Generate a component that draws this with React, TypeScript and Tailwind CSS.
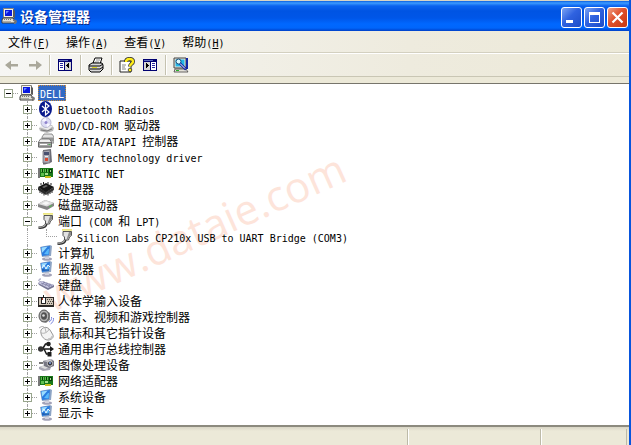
import { Fragment, useState } from "react";
import type { ReactNode } from "react";

const CJK = "font-['Noto_Sans_CJK_SC',sans-serif]";

function Svg({ children, crisp = false }: { children: ReactNode; crisp?: boolean }) {
  return (
    <svg
      viewBox="0 0 16 16"
      className="h-4 w-4 shrink-0"
      aria-hidden="true"
      shapeRendering={crisp ? "crispEdges" : "auto"}
    >
      {children}
    </svg>
  );
}

function ComputerIcon() {
  return (
    <Svg>
      <path d="M2.500 .5h10v9h-10z" fill="#f4f2e8" stroke="#88867c" />
      <path d="M12 1l2 2v7l-2-1z" fill="#5a5a5a" />
      <path d="M4 2h7v6H4z" fill="#0a18e0" />
      <path d="M5 3h3L5 6z" fill="#6a8cff" />
      <path d="M2 10h10l2 3v2H1v-3z" fill="#e4e2d8" stroke="#3c3c3c" />
      <path d="M3 11.5h7M2.500 13.500h7" stroke="#777" strokeDasharray="1 1" />
      <path d="M12 12.500c4-1 4 2.500 1 3" fill="none" stroke="#777" strokeWidth="1.500" />
    </Svg>
  );
}

function BluetoothIcon() {
  return (
    <Svg>
      <ellipse cx="7.500" cy="8" rx="6.500" ry="8" fill="#08188c" />
      <path d="M4 5l7 6-3.500 3V2L11 5l-7 6" fill="none" stroke="#fff" strokeWidth="1.200" />
    </Svg>
  );
}

function DiscIcon() {
  return (
    <Svg>
      <path d="M1 11l4-2 9-1 2 3-1 3-6 2-7-2z" fill="#b9b9b9" />
      <path d="M1 10l5-2 9 1-5 4z" fill="#ececec" />
      <path d="M3 13l6 1 5-2" stroke="#777" fill="none" />
      <circle cx="8" cy="5.500" r="5" fill="#dcdcf4" stroke="#a9a9c4" strokeWidth=".8" />
      <path d="M8 5.500L4 3.500A5 5 0 0 1 8 1zM8 5.500l4 2A5 5 0 0 1 9 10z" fill="#f8f6ff" />
      <circle cx="8" cy="5.500" r="1.500" fill="#8f83cd" />
    </Svg>
  );
}

function IdeIcon() {
  return (
    <Svg>
      <path d="M4 4l2-3h8l2 3v6H4z" fill="#e2e2e2" stroke="#777" strokeWidth=".8" />
      <path d="M4 4.500h12v4H4z" fill="#959595" />
      <path d="M0.500 9l2-3h9l2 3v5h-13z" fill="#efefef" stroke="#666" strokeWidth=".8" />
      <path d="M.5 9.500h13v4.500H.5z" fill="#a4a4a4" stroke="#555" strokeWidth=".7" />
      <path d="M2 11.500h7" stroke="#fff" />
      <path d="M10.500 11h2v1h-2z" fill="#4caf50" />
    </Svg>
  );
}

function MemoryIcon() {
  return (
    <Svg>
      <path d="M5 1l8-1 1 13-7 2.500H5z" fill="#707078" />
      <path d="M5 2l7-1v13H5z" fill="#a8a8b4" stroke="#66666e" strokeWidth=".7" />
      <path d="M6 3h5v3H6z" fill="#485070" />
      <path d="M7 7h3v1H7z" fill="#eee" />
      <path d="M7 9h3v3H7z" fill="#d84830" />
    </Svg>
  );
}

function CardIcon() {
  return (
    <Svg crisp>
      <path d="M0 3h2v10H0z" fill="#777" />
      <path d="M2 3h13v9H2z" fill="#187818" />
      <path d="M3 4h3v3H3zM7 4h3v3H7zM3 8h3v3H3z" fill="#5fc050" />
      <path d="M4 4h1v3H4zM8 4h1v3H8zM11 4h3v4h-3z" fill="#073c0a" />
      <path d="M12 5h1v2h-1zM7 8h3v2H7z" fill="#a4df8c" />
      <path d="M7 11h6v2H7z" fill="#c8c020" />
    </Svg>
  );
}

function ChipIcon() {
  return (
    <Svg>
      <path d="M0 6l8-4 8 4-8 6z" fill="#161616" />
      <path d="M0 6v3l8 5V11z" fill="#303030" />
      <path d="M16 6v3l-8 5V11z" fill="#454545" />
      <path d="M2 8v4M4 9v4M6 10.500v4M10 10.500v4M12 9v4M14 8v4" stroke="#222" />
      <path d="M3 4V2M5.500 3V1M10 3V1M13 4V2" stroke="#222" />
      <path d="M4 6l4-2 2 1-4 2z" fill="#666" />
    </Svg>
  );
}

function DiskIcon() {
  return (
    <Svg>
      <path d="M0 7l7-4 9 3v3l-7 4-9-3z" fill="#858585" />
      <path d="M0 7l7-4 9 3-7 3.500z" fill="#dedede" />
      <path d="M4 6.500l4-2 4 1.500-4 2z" fill="#f8f8f8" />
      <path d="M11 10l3-1.500" stroke="#4fc04f" />
    </Svg>
  );
}

function PortIcon() {
  return (
    <Svg>
      <path d="M.5 14.500c5 .5 7.500-.5 8-4.500" fill="none" stroke="#333" strokeWidth="2.600" />
      <path d="M.5 14c5 .5 7-.5 7.500-4" fill="none" stroke="#b8b8b8" strokeWidth="1.100" />
      <path d="M6 2.500h8.500v4l-2 1.500-1 3h-4V8L6 6.500z" fill="#e2e2e2" stroke="#444" strokeWidth=".9" />
      <path d="M12 3h2v3l-2 2-1 2.500h-1.500z" fill="#8c8c8c" />
      <path d="M5.500 .5h9" stroke="#d8cc00" strokeDasharray="1 1" />
      <path d="M5 1.500h10" stroke="#f2ee9c" />
    </Svg>
  );
}

function MonitorIcon({ wave = false }: { wave?: boolean }) {
  return (
    <Svg>
      <ellipse cx="9" cy="14" rx="5" ry="1.800" fill="#a3a3b8" />
      <path d="M7 11h4v3H7z" fill="#d0d0dc" />
      <path d="M2 2l10-2 2 1-1 10-9 1z" fill="#8da4c4" />
      <path d="M3 2l9-1-1 9-7 1z" fill="#2a7ce0" />
      <path d="M3.500 2.500l6-.8-5.300 6z" fill="#9adcff" />
      <path d="M6 9l4-5 1 0-.5 5.500z" fill="#58b8fa" />
      {wave && <path d="M4 7l2-3 2 4 2-4 2 2" fill="none" stroke="#e8f8ff" />}
      {wave && <path d="M4 9h7" stroke="#164690" />}
    </Svg>
  );
}

function KeyboardIcon() {
  return (
    <Svg>
      <path d="M3 5C0 4 0 2 3 2" fill="none" stroke="#9090b0" />
      <path d="M0 6l4-2 12 4v2l-6 3L1 8z" fill="#777794" />
      <path d="M0 6l4-2 12 4-6 3z" fill="#c8c8e2" />
      <path d="M3 6l9 3.500M5 5l9 3.500M4 7.500l3-2.500M7 8.500l3-2M10 9.500l3-2" stroke="#77779c" strokeWidth=".7" />
    </Svg>
  );
}

function HidIcon() {
  return (
    <Svg crisp>
      <path d="M0 4h16v10H0z" fill="#2c2826" />
      <path d="M1 5h14v7H1z" fill="#cfc6b8" />
      <path d="M9 6h1v1H9zM11 6h1v1h-1zM13 6h1v1h-1zM10 8h1v1h-1zM12 8h1v1h-1zM14 8h1v1h-1zM9 10h1v1H9zM11 10h1v1h-1zM13 10h1v1h-1z" fill="#4a4440" />
      <path d="M5 2h1v2H5zM3 4h5v7H3z" fill="#222" />
      <path d="M4 5h3v5H4z" fill="#fff" />
      <path d="M4 5h1v2H4z" fill="#a83828" />
    </Svg>
  );
}

function SoundIcon() {
  return (
    <Svg>
      <path d="M2 3l5-2 5 3v7l-4 3-5-2z" fill="#8a8a8a" />
      <ellipse cx="6" cy="7" rx="5" ry="6" fill="#b4b4b4" stroke="#555" />
      <ellipse cx="6" cy="7" rx="3" ry="3.800" fill="#525252" />
      <circle cx="5.500" cy="6.500" r="1.300" fill="#ddd" />
      <path d="M11 13c2-1 3-3 2.500-5M12.500 15c2-1 3.500-4 3-6" fill="none" stroke="#7c88e0" />
    </Svg>
  );
}

function MouseIcon() {
  return (
    <Svg>
      <path d="M1 3c3-2 4-2 6 0" fill="none" stroke="#aaa" />
      <path d="M3 5c3-4 7-3 9 0l3 5c1 3-2 5-5 5-5 0-8-6-7-10z" fill="#f4f4f4" stroke="#989898" />
      <path d="M3 8c4 1 7-1 8-4M7 3l1 4" fill="none" stroke="#a4a4a4" strokeWidth=".8" />
      <path d="M10 14c2 0 4-1 4-3" fill="none" stroke="#c4c4c4" strokeWidth="1.500" />
    </Svg>
  );
}

function UsbIcon() {
  return (
    <Svg>
      <path d="M2 8h12M4.500 8l3-5H10M6 8l2.500 5H12" fill="none" stroke="#1c1c1c" strokeWidth="1.500" />
      <circle cx="2.800" cy="8" r="2.800" fill="#333" />
      <circle cx="10.500" cy="3" r="2.300" fill="#222" />
      <path d="M9.500 11h4v4.500h-4zM12 5l4 3-4 3z" fill="#1c1c1c" />
    </Svg>
  );
}

function CameraIcon() {
  return (
    <Svg>
      <path d="M1 10l6-2 6 2-1 3-7 1-4-2z" fill="#a6a6b2" />
      <path d="M2 10l5-2 5 2-5 2z" fill="#ddd" />
      <path d="M5 4l8-2 3 2v5l-5 2-5-2z" fill="#777782" />
      <path d="M5 4l8-2 2 1-6 2z" fill="#c4c4cc" />
      <circle cx="12" cy="6.500" r="2.600" fill="#34343c" stroke="#e4e4e4" strokeWidth=".8" />
      <circle cx="12" cy="6" r="1" fill="#86a4e0" />
      <path d="M1 5h4v2H1z" fill="#777" />
    </Svg>
  );
}

/* Latin letters take half the width of a Chinese character. */
function Label({ text }: { text: string }) {
  const runs = text.match(/[\x20-\x7e]+|[^\x20-\x7e]+/g) ?? [];
  return (
    <span className="block whitespace-pre text-xs leading-4">
      {runs.map((run, i) =>
        run.charCodeAt(0) < 127 ? (
          <span key={i} className="font-['DejaVu_Sans_Mono',monospace] text-[10px] leading-none">
            {run}
          </span>
        ) : (
          <Fragment key={i}>{run}</Fragment>
        ),
      )}
    </span>
  );
}

function Expander({ open, name, onClick }: { open: boolean; name: string; onClick: () => void }) {
  return (
    <button
      type="button"
      aria-expanded={open}
      aria-label={name}
      onClick={onClick}
      className="flex h-[9px] w-[9px] shrink-0 items-center justify-center border border-[#98a58c] bg-white"
    >
      <svg viewBox="0 0 5 5" className="h-[5px] w-[5px]" shapeRendering="crispEdges" aria-hidden="true">
        <path d={open ? "M0 2h5v1H0z" : "M0 2h5v1H0zM2 0h1v5H2z"} fill="#000" />
      </svg>
    </button>
  );
}

type Device = { name: string; icon: ReactNode; children?: string[] };

const devices: Device[] = [
  { name: "Bluetooth Radios", icon: <BluetoothIcon /> },
  { name: "DVD/CD-ROM 驱动器", icon: <DiscIcon /> },
  { name: "IDE ATA/ATAPI 控制器", icon: <IdeIcon /> },
  { name: "Memory technology driver", icon: <MemoryIcon /> },
  { name: "SIMATIC NET", icon: <CardIcon /> },
  { name: "处理器", icon: <ChipIcon /> },
  { name: "磁盘驱动器", icon: <DiskIcon /> },
  {
    name: "端口 (COM 和 LPT)",
    icon: <PortIcon />,
    children: ["Silicon Labs CP210x USB to UART Bridge (COM3)"],
  },
  { name: "计算机", icon: <MonitorIcon /> },
  { name: "监视器", icon: <MonitorIcon wave /> },
  { name: "键盘", icon: <KeyboardIcon /> },
  { name: "人体学输入设备", icon: <HidIcon /> },
  { name: "声音、视频和游戏控制器", icon: <SoundIcon /> },
  { name: "鼠标和其它指针设备", icon: <MouseIcon /> },
  { name: "通用串行总线控制器", icon: <UsbIcon /> },
  { name: "图像处理设备", icon: <CameraIcon /> },
  { name: "网络适配器", icon: <CardIcon /> },
  { name: "系统设备", icon: <MonitorIcon /> },
  { name: "显示卡", icon: <MonitorIcon wave /> },
];

function DeviceNode({ device, last }: { device: Device; last: boolean }) {
  const [open, setOpen] = useState(Boolean(device.children));
  const line = "border-l border-dotted border-[#a0a0a0]";
  return (
    <li>
      <div className="flex h-4 items-center">
        <div className="flex h-4 w-[9px] flex-col items-center">
          <span className={`h-1 w-px ${line}`} />
          <Expander open={open} name={device.name} onClick={() => setOpen(!open)} />
          {!last && <span className={`h-[3px] w-px ${line}`} />}
        </div>
        <span className="mr-px w-[5px] border-t border-dotted border-[#a0a0a0]" />
        {device.icon}
        <span className="ml-1">
          <Label text={device.name} />
        </span>
      </div>
      {open &&
        device.children?.map((child) => (
          <div key={child} className="flex h-4 items-center pl-1">
            <span className={`h-4 w-[19px] ${line}`} />
            <span className="h-2 w-[11px] self-start border-b border-l border-dotted border-[#a0a0a0]" />
            <PortIcon />
            <span className="ml-1">
              <Label text={child} />
            </span>
          </div>
        ))}
    </li>
  );
}

function Tree() {
  const [open, setOpen] = useState(true);
  return (
    <ul className="pl-1 pt-px">
      <li>
        <div className="flex h-4 items-center">
          <Expander open={open} name="DELL" onClick={() => setOpen(!open)} />
          <span className="mr-px w-[5px] border-t border-dotted border-[#a0a0a0]" />
          <ComputerIcon />
          <span className="ml-[3px] border border-dotted border-[#c88a3c] bg-[#316ac5] px-px text-white">
            <span className="flex h-[14px] items-center">
              <Label text="DELL" />
            </span>
          </span>
        </div>
        {open && (
          <ul className="pl-[19px]">
            {devices.map((device, i) => (
              <DeviceNode key={device.name} device={device} last={i === devices.length - 1} />
            ))}
          </ul>
        )}
      </li>
    </ul>
  );
}

function Separator() {
  return <span className="mr-[2px] h-5 w-[2px] border-l border-r border-l-[#c5c2b0] border-r-white" />;
}

function ToolButton({ name, children }: { name: string; children: ReactNode }) {
  return (
    <button type="button" aria-label={name} className="flex h-5 w-[23px] items-center justify-center">
      {children}
    </button>
  );
}

function PaneIcon({ flip = false }: { flip?: boolean }) {
  return (
    <Svg crisp>
      <path d="M1 2h14v12H1z" fill="#000070" />
      <path d={flip ? "M2 5h6v8H2z" : "M8 5h6v8H8z"} fill="#d4d4d4" />
      <path d={flip ? "M9 5h5v8H9z" : "M2 5h5v8H2z"} fill="#fff" />
      <path
        d={flip ? "M10 6h3v1h-3zM10 8h3v1h-3zM10 10h3v1h-3z" : "M3 6h3v1H3zM3 8h3v1H3zM3 10h3v1H3z"}
        fill="#2828a0"
      />
      <path d="M2 3h9v1H2z" fill="#5c6cc0" />
      <path d={flip ? "M4 6h1v1h1v1h1v1H6v1H5v1H4z" : "M12 6h-1v1h-1v1H9v1h1v1h1v1h1z"} fill="#000" />
    </Svg>
  );
}

function Toolbar() {
  return (
    <div role="toolbar" className="flex h-[23px] items-center border-t border-white">
      <ToolButton name="后退">
        <Svg>
          <path d="M1 8l6-4.500V7h7v2.500H7V13z" fill="#aaa89b" />
        </Svg>
      </ToolButton>
      <ToolButton name="前进">
        <Svg>
          <path d="M15 8L9 3.500V7H2v2.500h7V13z" fill="#aaa89b" />
        </Svg>
      </ToolButton>
      <span className="w-[3px]" />
      <Separator />
      <ToolButton name="显示/隐藏控制台树">
        <PaneIcon />
      </ToolButton>
      <span className="w-1" />
      <Separator />
      <ToolButton name="打印">
        <Svg>
          <path d="M5 6l2-5h7l-2 6z" fill="#fff" stroke="#000" />
          <path d="M8 3h4M7 5h4" stroke="#777" strokeWidth=".8" />
          <path d="M1 8l3-2h10l1 2v4l-3 3H3l-2-2z" fill="#d8d8d8" stroke="#000" />
          <path d="M1 9h11l3-2M2 12h10l3-2" fill="none" stroke="#000" />
          <path d="M4 10.500h5" stroke="#ded720" />
        </Svg>
      </ToolButton>
      <span className="w-1" />
      <Separator />
      <ToolButton name="帮助">
        <Svg>
          <path d="M1 4h10l1 2v9H1z" fill="#fff" stroke="#222" />
          <path d="M3 8h4M3 10h3M3 12h4" stroke="#888" />
          <path d="M7 5c0-4 7-4 7-.5 0 2.500-3 2-3 5" fill="none" stroke="#333" strokeWidth="4" />
          <path d="M7 5c0-4 7-4 7-.5 0 2.500-3 2-3 5" fill="none" stroke="#ffed1a" strokeWidth="2.400" />
          <circle cx="11" cy="13" r="1.800" fill="#ffed1a" stroke="#333" strokeWidth=".8" />
        </Svg>
      </ToolButton>
      <ToolButton name="显示/隐藏操作窗格">
        <PaneIcon flip />
      </ToolButton>
      <span className="w-1" />
      <Separator />
      <ToolButton name="扫描检测硬件改动">
        <Svg>
          <path d="M1 1h12v10H1z" fill="#e8e6db" stroke="#444" />
          <path d="M2.500 2.500h9v7h-9z" fill="#24b8e8" />
          <path d="M13 1h2v11h-2z" fill="#1226a4" />
          <path d="M2 12h11l2 3H1z" fill="#e4e2d8" stroke="#444" strokeWidth=".8" />
          <circle cx="5.500" cy="4.500" r="2.500" fill="#dcfaff" stroke="#124a78" />
          <path d="M7 6.500l6 6" stroke="#1322a0" strokeWidth="2.500" />
          <path d="M7 6.500l5 5" stroke="#fff" />
          <path d="M3 13.500h3" stroke="#28b028" />
        </Svg>
      </ToolButton>
    </div>
  );
}

const menus = [
  { name: "文件", letter: "F" },
  { name: "操作", letter: "A" },
  { name: "查看", letter: "V" },
  { name: "帮助", letter: "H" },
];

const caption =
  "flex h-[21px] w-[21px] items-center justify-center rounded-[3px] border border-white";

export default function App() {
  return (
    <main
      className={`flex min-h-screen flex-col border-r-2 border-[#0855dd] bg-[#ece9d8] text-black ${CJK}`}
    >
      <header className="flex h-[31px] items-center border-t border-[#d8d4c4] bg-[linear-gradient(to_bottom,#0a5fe0_0px,#3c9bff_2px,#0a62ee_5px,#0054e3_10px,#0056e8_17px,#0068ff_23px,#0066fb_27px,#0040c8_30px)] pl-px pr-px">
        <ComputerIcon />
        <h1 className="ml-[3px] flex-1 text-sm font-bold leading-5 text-white [text-shadow:1px_1px_#0a2a86]">
          设备管理器
        </h1>
        <div className="flex gap-[2px] pt-[3px]">
          <button
            type="button"
            aria-label="最小化"
            className={`${caption} bg-[linear-gradient(135deg,#7ca4f4,#2f62e0_45%,#1c4cc8)]`}
          >
            <svg viewBox="0 0 19 19" className="h-[19px] w-[19px]" aria-hidden="true">
              <path d="M4 12h7v3H4z" fill="#fff" />
            </svg>
          </button>
          <button
            type="button"
            aria-label="最大化"
            className={`${caption} bg-[linear-gradient(135deg,#7ca4f4,#2f62e0_45%,#1c4cc8)]`}
          >
            <svg viewBox="0 0 19 19" className="h-[19px] w-[19px]" aria-hidden="true">
              <path d="M4 4h11v11H4zM5 7v7h9V7z" fill="#fff" fillRule="evenodd" />
            </svg>
          </button>
          <button
            type="button"
            aria-label="关闭"
            className={`${caption} bg-[linear-gradient(135deg,#f0a084,#e0502c_45%,#c83810)]`}
          >
            <svg viewBox="0 0 19 19" className="h-[19px] w-[19px]" aria-hidden="true">
              <path d="M4.500 4.500l10 10M14.500 4.500l-10 10" stroke="#fff" strokeWidth="2.200" />
            </svg>
          </button>
        </div>
      </header>

      <div className="border-b border-[#c9c6b4] bg-[linear-gradient(to_right,#f6f6f4,#eeebde_65%,#ece9d8)]">
        <nav className="flex h-[22px] items-center gap-4 border-b border-[#d3d0c0] pl-2">
          {menus.map((menu) => (
            <button key={menu.letter} type="button" className="text-xs leading-4">
              {menu.name}
              <span className="font-['DejaVu_Sans_Mono',monospace] text-[10px] leading-none">
                (<u>{menu.letter}</u>)
              </span>
            </button>
          ))}
        </nav>
        <Toolbar />
      </div>

      <section className="relative mt-[6px] flex-1 border-b-2 border-t border-b-[#8c8a7e] border-t-[#77756b] bg-white">
        <div className="pointer-events-none absolute left-[54px] top-[191px] origin-bottom-left -rotate-[24deg] font-['Open_Sans',sans-serif] text-[42px] leading-none text-[#fde4da]">
          www.dataie.com
        </div>
        <div className="relative">
          <Tree />
        </div>
      </section>

      <footer className="flex h-[18px] bg-[linear-gradient(to_bottom,#d8d5c5,#ece9d8_4px)] pr-[2px] pt-[2px]">
        <span className="flex-1 border-r border-[#bdbaa8]" />
        <span className="w-[133px] border-l border-r border-l-white border-r-[#bdbaa8]" />
        <span className="w-[86px] border-l border-r border-l-white border-r-[#bdbaa8]" />
      </footer>
    </main>
  );
}
